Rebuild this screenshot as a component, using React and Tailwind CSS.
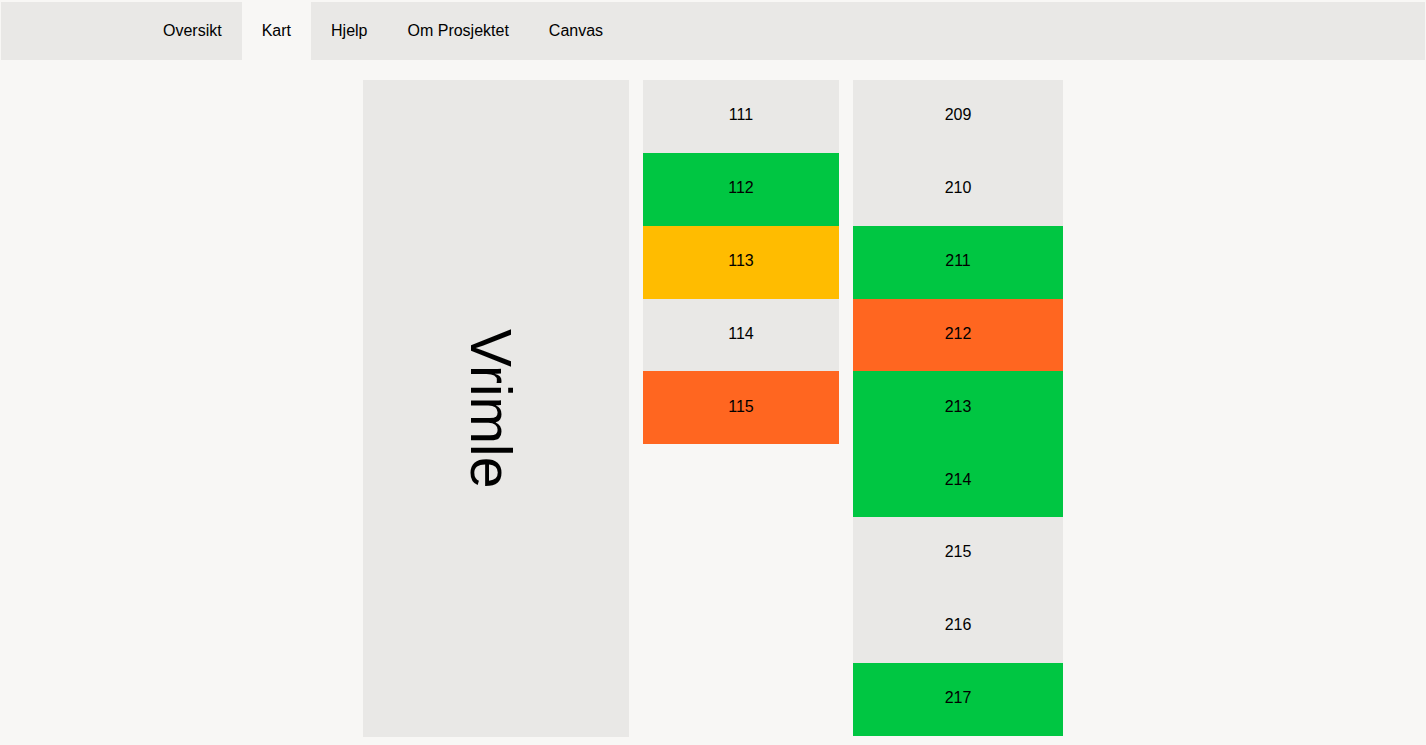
import React from 'react';

const tabs = ['Oversikt', 'Kart', 'Hjelp', 'Om Prosjektet', 'Canvas'];

const colors = {
    grey: 'bg-[#e9e8e6]',
    green: 'bg-[#00c642]',
    yellow: 'bg-[#ffbc00]',
    orange: 'bg-[#ff6620]',
};

const middleRooms = [
    { id: 111, status: 'grey' },
    { id: 112, status: 'green' },
    { id: 113, status: 'yellow' },
    { id: 114, status: 'grey' },
    { id: 115, status: 'orange' },
];

const rightRooms = [
    { id: 209, status: 'grey' },
    { id: 210, status: 'grey' },
    { id: 211, status: 'green' },
    { id: 212, status: 'orange' },
    { id: 213, status: 'green' },
    { id: 214, status: 'green' },
    { id: 215, status: 'grey' },
    { id: 216, status: 'grey' },
    { id: 217, status: 'green' },
];

const Room = ({ id, status }) => (
    <div className={`h-[72.85px] pb-[2px] flex items-center justify-center text-[16px] text-black ${colors[status]}`}>
        {id}
    </div>
);

const App = () => {
    return (
        <div className="min-h-screen bg-[#f8f7f5] pt-[2px] px-[1px] font-['Liberation_Sans',Arial,sans-serif] text-black">
            {/* Navigation */}
            <nav className="h-[58px] bg-[#e9e8e6] flex pl-[142px]">
                {tabs.map((tab) => (
                    <div
                        key={tab}
                        className={`px-5 flex items-center text-[16px] ${tab === 'Kart' ? 'bg-[#f8f7f5]' : ''}`}
                    >
                        {tab}
                    </div>
                ))}
            </nav>

            {/* Map */}
            <div className="flex justify-center gap-[14px] mt-[20px] pb-2">
                <div className="w-[266px] h-[657px] bg-[#e9e8e6] flex items-center justify-center">
                    <span className="[writing-mode:vertical-rl] text-[57px] leading-none mr-3">Vrimle</span>
                </div>
                <div className="w-[196px] flex flex-col self-start">
                    {middleRooms.map((r) => (
                        <Room key={r.id} {...r} />
                    ))}
                </div>
                <div className="w-[210px] flex flex-col self-start">
                    {rightRooms.map((r) => (
                        <Room key={r.id} {...r} />
                    ))}
                </div>
            </div>
        </div>
    );
};

export default App;
